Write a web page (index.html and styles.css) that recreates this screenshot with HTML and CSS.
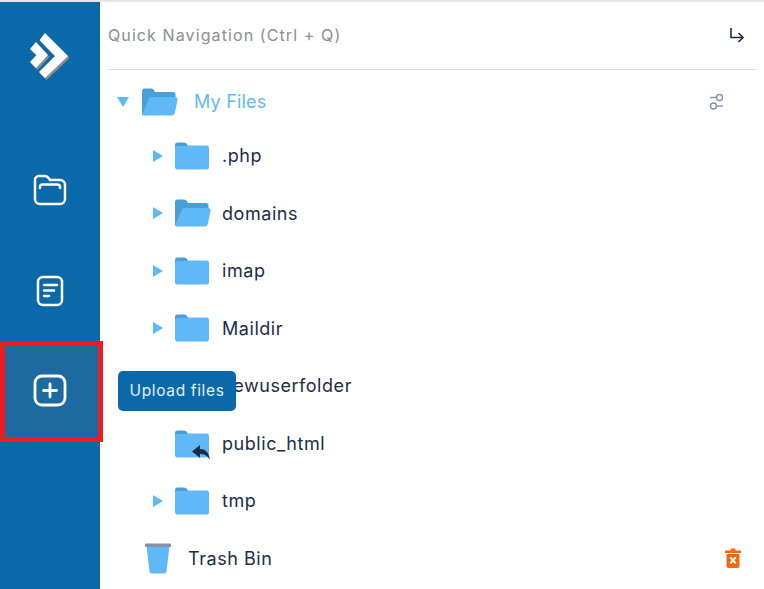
FILE: index.html
```html
<!DOCTYPE html>
<html lang="en">
<head>
<meta charset="utf-8">
<title>File Manager</title>
<link rel="stylesheet" href="styles.css">
</head>
<body>
<svg class="defs" width="0" height="0" aria-hidden="true">
  <defs>
    <g id="folder">
      <rect x="0" y="3.500" width="34" height="24" rx="2.500" fill="#5fb9f8"/>
      <path d="M0 6V3A2.500 2.500 0 0 1 2.500.5H9c1.500 0 2.500.8 3.300 2.200L13 4H2.500A2.500 2.500 0 0 0 0 6.500z" fill="#4a9fd6"/>
    </g>
    <g id="folder-open">
      <path d="M0 3A2.500 2.500 0 0 1 2.500.5H9c1.500 0 2.500.8 3.300 2.200L13 4h18a2.500 2.500 0 0 1 2.500 2.500V12H8L3 27.500H2.500A2.500 2.500 0 0 1 0 25z" fill="#4a9fd6"/>
      <path d="M6.500 11.500A3 3 0 0 1 9.500 9H33a2.500 2.500 0 0 1 2.500 3l-2.800 13.500a2.800 2.800 0 0 1-2.700 2H3a2.200 2.200 0 0 1-2.200-2.600z" fill="#5fb9f8"/>
    </g>
    <path id="arrow" d="M0 0L10 6 0 12z" fill="#5fb9f8"/>
  </defs>
</svg>

<div class="app">
  <nav class="sidebar">
    <div class="logo">
      <svg width="100" height="106" viewBox="0 0 100 106">
        <g fill="#8d8d8d" transform="translate(1.500 2)">
          <path d="M45 33L68 56 45 78 39 72 55 56 39.500 40z"/>
          <path d="M36 42L48 55 36 68 30 62 36.500 55 30 49z"/>
        </g>
        <g fill="#fff">
          <path d="M45 33L68 56 45 78 39 72 55 56 39.500 40z"/>
          <path d="M36 42L48 55 36 68 30 62 36.500 55 30 49z"/>
        </g>
      </svg>
    </div>
    <div class="nav-item">
      <svg width="36" height="34" viewBox="0 0 36 34" fill="none" stroke="#fff" stroke-width="2.500" stroke-linecap="round" stroke-linejoin="round">
        <path d="M3 10V7a4 4 0 0 1 4-4h6c2 0 3 1 4 2.500L18 7h10a5 5 0 0 1 5 5v14a5 5 0 0 1-5 5H8a5 5 0 0 1-5-5z"/>
        <path d="M8 15v-1a2.500 2.500 0 0 1 2.500-2.500h15A2.500 2.500 0 0 1 28 14v1"/>
      </svg>
    </div>
    <div class="nav-item">
      <svg width="30" height="34" viewBox="0 0 30 34" fill="none" stroke="#fff" stroke-width="2.500" stroke-linecap="round">
        <rect x="3" y="3" width="24" height="28" rx="5"/>
        <path d="M9 11h13M9 16.500h10M9 22h5"/>
      </svg>
    </div>
    <div class="nav-item">
      <svg width="36" height="36" viewBox="0 0 36 36" fill="none" stroke="#fff" stroke-width="2.800" stroke-linecap="round">
        <rect x="3" y="3" width="30" height="29" rx="7"/>
        <path d="M18 11v13M11.500 17.500h13"/>
      </svg>
    </div>
  </nav>

  <main class="main">
    <header class="search">
      <span class="search-label">Quick Navigation (Ctrl + Q)</span>
      <svg class="enter-icon" width="16" height="16" viewBox="0 0 16 16" fill="none" stroke="#1b2c49" stroke-width="1.600">
        <path d="M2 1v9.500h12"/>
        <path d="M9.500 6l4.500 4.500L9.500 15"/>
      </svg>
    </header>

    <ul class="tree">
      <li class="row row-root">
        <svg class="caret-down" width="12" height="10" viewBox="0 0 12 10"><path d="M0 0h12L6 10z" fill="#5fb9f8"/></svg>
        <svg class="root-folder" width="36" height="28" viewBox="0 0 36 28"><use href="#folder-open"/></svg>
        <span class="root-name">My Files</span>
        <svg class="row-sliders" width="16" height="18" viewBox="0 0 16 18" fill="none" stroke="#8790a6" stroke-width="1.400">
          <circle cx="10.500" cy="4.500" r="3"/><path d="M1 4.500h6.500"/>
          <circle cx="4.500" cy="13" r="3"/><path d="M7.500 13H14"/>
        </svg>
      </li>
      <li class="row">
        <svg class="arrow" width="10" height="12" viewBox="0 0 10 12"><use href="#arrow"/></svg>
        <svg class="folder" width="36" height="28" viewBox="0 0 36 28"><use href="#folder"/></svg>
        <span class="name">.php</span>
      </li>
      <li class="row">
        <svg class="arrow" width="10" height="12" viewBox="0 0 10 12"><use href="#arrow"/></svg>
        <svg class="folder" width="36" height="28" viewBox="0 0 36 28"><use href="#folder-open"/></svg>
        <span class="name">domains</span>
      </li>
      <li class="row">
        <svg class="arrow" width="10" height="12" viewBox="0 0 10 12"><use href="#arrow"/></svg>
        <svg class="folder" width="36" height="28" viewBox="0 0 36 28"><use href="#folder"/></svg>
        <span class="name">imap</span>
      </li>
      <li class="row">
        <svg class="arrow" width="10" height="12" viewBox="0 0 10 12"><use href="#arrow"/></svg>
        <svg class="folder" width="36" height="28" viewBox="0 0 36 28"><use href="#folder"/></svg>
        <span class="name">Maildir</span>
      </li>
      <li class="row">
        <svg class="arrow" width="10" height="12" viewBox="0 0 10 12"><use href="#arrow"/></svg>
        <svg class="folder" width="36" height="28" viewBox="0 0 36 28"><use href="#folder"/></svg>
        <span class="name">newuserfolder</span>
      </li>
      <li class="row">
        <span class="arrow-gap"></span>
        <svg class="folder folder-link" width="36" height="30" viewBox="0 0 36 30">
          <use href="#folder"/>
          <path d="M17 21.500l8-6.500v4c5 0 9 3 10 11-2.500-4-5-6-10-6v4z" fill="#1b2c49"/>
        </svg>
        <span class="name">public_html</span>
      </li>
      <li class="row">
        <svg class="arrow" width="10" height="12" viewBox="0 0 10 12"><use href="#arrow"/></svg>
        <svg class="folder" width="36" height="28" viewBox="0 0 36 28"><use href="#folder"/></svg>
        <span class="name">tmp</span>
      </li>
      <li class="row row-trash">
        <svg class="trash" width="28" height="31" viewBox="0 0 28 31">
          <path d="M2.500 3h23l-3 25.500a2.500 2.500 0 0 1-2.500 2H8a2.500 2.500 0 0 1-2.500-2z" fill="#5fb9f8"/>
          <rect x="1" y="0.500" width="26" height="3.500" rx="1" fill="#8790a6"/>
        </svg>
        <span class="trash-name">Trash Bin</span>
        <svg class="row-bin" width="16" height="20" viewBox="0 0 16 20">
          <path d="M5.500 2.500V1.500a1 1 0 0 1 1-1h3a1 1 0 0 1 1 1v1H15a1 1 0 0 1 1 1V5H0V3.500a1 1 0 0 1 1-1z" fill="#f26a0f"/>
          <path d="M1.500 6h13v12a2 2 0 0 1-2 2h-9a2 2 0 0 1-2-2z" fill="#f26a0f"/>
          <path d="M5.300 9.300l5.400 6M10.700 9.300l-5.400 6" stroke="#fff" stroke-width="2"/>
        </svg>
      </li>
    </ul>
  </main>
</div>

<div class="highlight"></div>
<div class="tooltip">Upload files</div>
</body>
</html>
```

FILE: styles.css
```css
* { box-sizing: border-box; }
html, body { margin: 0; padding: 0; }
body {
  width: 764px;
  height: 589px;
  overflow: hidden;
  position: relative;
  background: #fff;
  font-family: "Inter", "Noto Sans", sans-serif;
  color: #1b2c49;
}
.defs { position: absolute; }
.app {
  display: flex;
  height: 587px;
  margin-top: 2px;
}
body::before {
  content: "";
  position: absolute;
  top: 0;
  left: 0;
  right: 0;
  height: 2px;
  background: #e6e6e6;
}
.sidebar {
  width: 100px;
  flex: none;
  background: #0a6aa9;
  display: flex;
  flex-direction: column;
}
.logo { height: 137px; }
.logo svg { display: block; margin-top: -2px; }
.nav-item {
  height: 101px;
  display: flex;
  align-items: center;
  justify-content: center;
}
.nav-item svg { display: block; }
.nav-item:last-child { background: #1c6a9f; height: 100px; }

.main { flex: 1; min-width: 0; padding: 0 8px; }
.search {
  height: 68px;
  border-bottom: 1px solid #dcdcdc;
  display: flex;
  align-items: center;
  justify-content: space-between;
  padding-right: 11px;
}
.search-label {
  font-size: 16px;
  letter-spacing: 1.1px;
  color: #8a8e94;
  margin-top: -1px;
}
.enter-icon { margin-top: -2px; }

.tree {
  list-style: none;
  margin: 0;
  padding: 6.500px 0 0;
}
.row {
  height: 57.5px;
  display: flex;
  align-items: center;
  padding-left: 45px;
  font-size: 18px;
  letter-spacing: 0.55px;
}
.row-root { height: 50.500px; padding-left: 9px; }
.row-trash { padding-left: 36px; }
.caret-down { margin-right: 13px; }
.root-folder { margin-right: 16px; }
.root-name { color: #5fb9f8; flex: 1; letter-spacing: 0.2px; }
.arrow { margin-right: 12px; }
.arrow-gap { width: 22px; flex: none; }
.folder { margin-right: 11px; }
.folder-link { margin-top: 4px; margin-right: 11px; }
.trash { margin-right: 16px; }
.trash-name { flex: 1; }
.row-sliders { margin-right: 31px; }
.row-bin { margin-right: 15px; }

.highlight {
  position: absolute;
  left: 0;
  top: 341px;
  width: 103px;
  height: 101px;
  border: 5px solid #ed1c24;
}
.tooltip {
  position: absolute;
  left: 118px;
  top: 371px;
  width: 118px;
  height: 40px;
  background: #0a6aa9;
  border-radius: 5px;
  color: #e4eef6;
  font-size: 15.500px;
  letter-spacing: 0.65px;
  line-height: 40px;
  text-align: center;
}
```
